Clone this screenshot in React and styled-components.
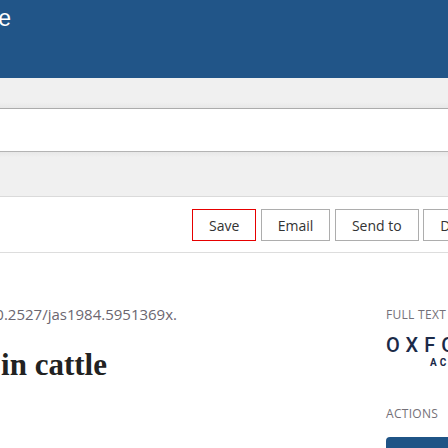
import React from "react";
import styled, { createGlobalStyle } from "styled-components";

const Global = createGlobalStyle`
  html, body { margin: 0; padding: 0; background: #fff; }
  body { width: 448px; height: 448px; overflow: hidden; font-family: "Open Sans", "Liberation Sans", sans-serif; }
`;

const Page = styled.div`
  width: 448px;
  overflow: hidden;
`;

const Header = styled.header`
  height: 78px;
  background: #215588;
  box-sizing: border-box;
  padding-top: 5px;
`;

const SiteTitle = styled.div`
  width: 11px;
  display: flex;
  justify-content: flex-end;
  white-space: nowrap;
  font-family: "Liberation Sans", Arial, sans-serif;
  font-size: 23px;
  line-height: normal;
  color: #fff;
`;

const NavBar = styled.nav`
  height: 30px;
  background: linear-gradient(to bottom, #f0f0f0 0%, #f0f0f0 80%, #e7e7e7 100%);
  border-bottom: 1px solid #acacac;
`;

const Spacer = styled.div`
  height: 42px;
`;

const SubBar = styled.div`
  height: 44px;
  background: linear-gradient(to bottom, #e8e8e8 0%, #f0f0f0 12%, #f0f0f0 100%);
  border-top: 1px solid #b4b4b4;
  border-bottom: 1px solid #dadada;
`;

const Toolbar = styled.div`
  display: flex;
  gap: 4.5px;
  padding: 12px 0 11px 192px;
  border-bottom: 1px solid #dddddd;
  white-space: nowrap;
`;

const ToolButton = styled.button`
  flex: none;
  height: 32px;
  padding: 0 16px;
  background: #fff;
  border: 1px solid ${(p) => (p.$active ? "#e60000" : "#adadad")};
  font-family: "Open Sans", "Liberation Sans", sans-serif;
  font-size: 14px;
  color: #333;
  cursor: pointer;
`;

const Content = styled.main`
  display: grid;
  grid-template-columns: 386px 200px;
`;

const LeftCol = styled.section`
  display: flex;
  flex-direction: column;
`;

const Anchored = styled.div`
  width: ${(p) => p.$w}px;
  display: flex;
  justify-content: flex-end;
  white-space: nowrap;
`;

const Doi = styled.div`
  margin-top: 51px;
  font-size: 15px;
  line-height: 20px;
  color: #6b6670;
`;

const ArticleTitle = styled.h1`
  margin: 22.5px 0 0;
  font-family: "Liberation Serif", "Times New Roman", serif;
  font-weight: 700;
  font-size: 31px;
  line-height: 36px;
  color: #222;
`;

const RightCol = styled.aside`
  display: flex;
  flex-direction: column;
  align-items: flex-start;
`;

const SideLabel = styled.div`
  margin-top: ${(p) => p.$mt}px;
  font-size: 12px;
  line-height: 16px;
  letter-spacing: 0.3px;
  color: #747078;
  text-transform: uppercase;
`;

const Logo = styled.div`
  margin-top: 12.4px;
  display: flex;
  flex-direction: column;
  color: #1b2a48;
  font-family: Roboto, "Liberation Sans", sans-serif;
  white-space: nowrap;
`;

const LogoMain = styled.span`
  font-size: 20px;
  line-height: 20px;
  font-weight: 500;
  letter-spacing: 6px;
`;

const LogoSub = styled.span`
  margin: 2.3px 0 0 44px;
  font-size: 10px;
  line-height: 10px;
  font-weight: 700;
  letter-spacing: 3px;
`;

const ActionButton = styled.button`
  margin-top: 15px;
  width: 200px;
  height: 40px;
  border: none;
  border-radius: 4px;
  background: #1f5486;
`;

export default function App() {
  return (
    <Page>
      <Global />
      <Header>
        <SiteTitle>Journal of Animal Science</SiteTitle>
      </Header>
      <NavBar />
      <Spacer />
      <SubBar />
      <Toolbar>
        <ToolButton $active>Save</ToolButton>
        <ToolButton>Email</ToolButton>
        <ToolButton>Send to</ToolButton>
        <ToolButton>Download</ToolButton>
      </Toolbar>
      <Content>
        <LeftCol>
          <Doi>
            <Anchored $w={177}>https://doi.org/10.2527/jas1984.5951369x.</Anchored>
          </Doi>
          <ArticleTitle>
            <Anchored $w={107}>Effect of growth promotants on growth in cattle</Anchored>
          </ArticleTitle>
        </LeftCol>
        <RightCol>
          <SideLabel $mt={54}>Full text</SideLabel>
          <Logo>
            <LogoMain>OXFORD</LogoMain>
            <LogoSub>ACADEMIC</LogoSub>
          </Logo>
          <SideLabel $mt={38}>Actions</SideLabel>
          <ActionButton aria-label="Get access" />
        </RightCol>
      </Content>
    </Page>
  );
}
